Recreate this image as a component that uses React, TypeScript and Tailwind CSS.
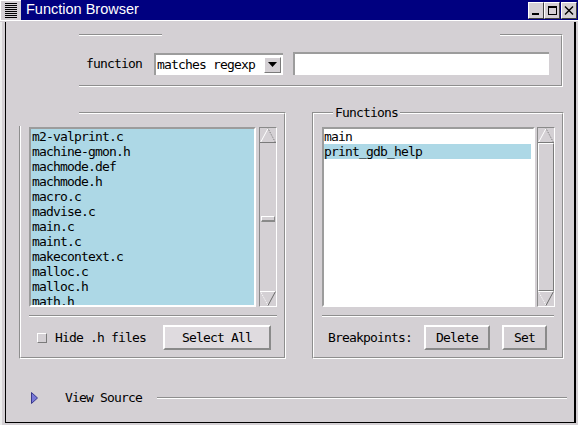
import React from "react";

const LEFT_FILES = [
  "m2-valprint.c",
  "machine-gmon.h",
  "machmode.def",
  "machmode.h",
  "macro.c",
  "madvise.c",
  "main.c",
  "maint.c",
  "makecontext.c",
  "malloc.c",
  "malloc.h",
  "math.h",
];

// etched line: dark gray on top, white under it
const Etched = ({ className = "" }: { className?: string }) => (
  <div className={`h-[2px] border-t border-b border-t-[#8e8e8e] border-b-white ${className}`} />
);

const UpArrow = () => (
  <svg width="16" height="15" className="block shrink-0">
    <line x1="0.5" y1="14.5" x2="8" y2="0.5" stroke="#ffffff" />
    <line x1="8" y1="0.5" x2="15.5" y2="14.5" stroke="#7a7a7a" strokeDasharray="1 1" />
    <line x1="0" y1="14.5" x2="16" y2="14.5" stroke="#7a7a7a" />
  </svg>
);

const DownArrow = () => (
  <svg width="16" height="15" className="block shrink-0">
    <line x1="0" y1="0.5" x2="16" y2="0.5" stroke="#ffffff" />
    <line x1="0.5" y1="0.5" x2="8" y2="14.5" stroke="#ffffff" strokeDasharray="1 1" />
    <line x1="8" y1="14.5" x2="15.5" y2="0.5" stroke="#6a6a6a" />
  </svg>
);

const Scrollbar = ({ full }: { full?: boolean }) => (
  <div className="w-[18px] h-[180px] flex flex-col border border-t-[#8a8a8a] border-l-[#8a8a8a] border-r-white border-b-white">
    <UpArrow />
    <div className="flex-1 flex flex-col">
      {full ? (
        <div className="flex-1 border border-t-white border-l-white border-r-[#7a7a7a] border-b-[#7a7a7a]" />
      ) : (
        <div className="mt-[73px] mx-px h-[6px] border-t border-l border-r border-b-2 border-t-white border-l-white border-r-[#8a8a8a] border-b-[#8a8a8a]" />
      )}
    </div>
    <DownArrow />
  </div>
);

const Button = ({ label, className = "" }: { label: string; className?: string }) => (
  <div
    className={`h-[25px] flex items-center justify-center border-t-2 border-l-2 border-b-2 border-r-2 border-t-white border-l-white border-b-[#8a8a8a] border-r-[#8a8a8a] ${className}`}
  >
    {label}
  </div>
);

const TitleButton = ({ children }: { children: React.ReactNode }) => (
  <div className="w-[16px] h-[17px] bg-[#d4d0d4] border border-t-white border-l-white border-r-[#404040] border-b-[#404040]">
    <svg width="14" height="15" className="block">
      {children}
    </svg>
  </div>
);

export default function App() {
  return (
    <div className="w-[578px] h-[425px] bg-[#d4d0d4] flex flex-col overflow-hidden text-black text-[13px] tracking-[-0.83px] [font-family:'DejaVu_Sans_Mono',monospace]">
      {/* title bar */}
      <div className="flex h-[20px] shrink-0">
        <div className="w-[21px] h-[20px] flex items-center justify-center border-t border-l border-t-white border-l-white">
          <svg width="12" height="15" className="block">
            {[0, 2, 4, 6, 8, 10, 12, 14].map((y) => (
              <line key={y} x1="0" y1={y + 0.5} x2="12" y2={y + 0.5} stroke="#000" />
            ))}
          </svg>
        </div>
        <div className="flex-1 bg-[#000080] flex items-center pl-[5px] text-white text-[14.5px] tracking-normal [font-family:'Liberation_Sans',Arial,sans-serif]">
          Function Browser
        </div>
        <div className="bg-[#000080] flex pt-[2px] pr-px">
          <TitleButton>
            <rect x="3" y="10" width="7" height="2" fill="#000" />
          </TitleButton>
          <TitleButton>
            <rect x="3.5" y="3.5" width="8" height="8" fill="none" stroke="#000" />
            <rect x="3" y="3" width="9" height="2" fill="#000" />
          </TitleButton>
          <div className="ml-px">
            <TitleButton>
              <path d="M3 3.5 L11 11.5 M11 3.5 L3 11.5" stroke="#000" strokeWidth="1.4" />
            </TitleButton>
          </div>
        </div>
      </div>
      <div className="h-[2px] shrink-0 border-t border-t-white" />

      {/* window frame */}
      <div className="flex-1 min-h-0 border-l-2 border-l-[#ececec] pl-[3px] pr-[2px] pb-[2px]">
        <div className="h-full flex flex-col border-l border-r-2 border-b border-black pt-[12px]">
          {/* search frame */}
          <div className="relative ml-[73px] w-[484px] h-[53px] border-t border-r border-b border-t-[#8e8e8e] border-r-white border-b-white">
            <div className="h-full border-t border-r border-b border-t-white border-r-[#8e8e8e] border-b-[#8e8e8e]">
              <div className="mt-[16px] h-[23px] flex items-center">
                <div className="w-[75px] pl-[7px]">function</div>
                <div className="w-[129px] h-[22px] flex items-center bg-white border-t-2 border-l-2 border-t-[#9c9c9c] border-l-[#9c9c9c]">
                  <div className="flex-1 pl-px">matches regexp</div>
                  <div className="w-[17px] h-[16px] mr-[2px] bg-[#d4d0d4] flex items-center justify-center border border-t-white border-l-white border-r-[#7a7a7a] border-b-[#7a7a7a]">
                    <svg width="9" height="5" className="block">
                      <polygon points="0,0 9,0 4.5,5" fill="#000" />
                    </svg>
                  </div>
                </div>
                <div className="ml-[10px] w-[256px] h-[23px] bg-white border-t-2 border-l-2 border-t-[#9c9c9c] border-l-[#9c9c9c]" />
              </div>
            </div>
            <div className="absolute left-[83px] -top-px w-[338px] h-[2px] bg-[#d4d0d4]" />
          </div>

          {/* the two list frames */}
          <div className="mt-[25px] flex">
            <div className="relative ml-[13px] w-[267px] h-[247px] border border-t-[#8e8e8e] border-l-[#8e8e8e] border-r-white border-b-white">
              <div className="h-full border border-t-white border-l-white border-r-[#8e8e8e] border-b-[#8e8e8e] pl-[8px] pt-[13px]">
                <div className="flex">
                  <div className="w-[227px] h-[180px] bg-[#add8e6] overflow-hidden border-2 border-t-[#9c9c9c] border-l-[#9c9c9c] border-r-white border-b-white">
                    {LEFT_FILES.map((f) => (
                      <div key={f} className="h-[15px] leading-[15px] pl-px whitespace-nowrap">
                        {f}
                      </div>
                    ))}
                  </div>
                  <div className="ml-[3px]">
                    <Scrollbar />
                  </div>
                </div>
                <Etched className="mt-[8px] w-[248px]" />
                <div className="mt-[8px] h-[25px] flex items-center">
                  <div className="ml-[8px] w-[10px] h-[10px] border border-t-white border-l-white border-r-[#7a7a7a] border-b-[#7a7a7a]" />
                  <div className="ml-[8px] w-[108px]">Hide .h files</div>
                  <Button label="Select All" className="w-[108px] bg-[#dfdbdf]" />
                </div>
              </div>
              <div className="absolute -left-px -top-px w-[60px] h-[14px] bg-[#d4d0d4]" />
            </div>

            <div className="relative ml-[26px] w-[252px] h-[247px] border border-t-[#8e8e8e] border-l-[#8e8e8e] border-r-white border-b-white">
              <div className="h-full border border-t-white border-l-white border-r-[#8e8e8e] border-b-[#8e8e8e] pl-[8px] pt-[13px]">
                <div className="flex">
                  <div className="w-[213px] h-[180px] bg-white overflow-hidden border-2 border-t-[#9c9c9c] border-l-[#9c9c9c] border-r-white border-b-white">
                    <div className="h-[15px] leading-[15px] whitespace-nowrap">main</div>
                    <div className="h-[15px] leading-[15px] whitespace-nowrap bg-[#add8e6] mr-[2px]">print_gdb_help</div>
                  </div>
                  <div className="ml-[2px]">
                    <Scrollbar full />
                  </div>
                </div>
                <Etched className="mt-[8px] w-[232px]" />
                <div className="mt-[8px] h-[25px] flex items-center">
                  <div className="ml-[6px] w-[96px]">Breakpoints:</div>
                  <Button label="Delete" className="w-[66px]" />
                  <Button label="Set" className="ml-[12px] w-[45px]" />
                </div>
              </div>
              <div className="absolute left-[20px] -top-[8px] h-[15px] leading-[15px] px-[2px] bg-[#d4d0d4]">Functions</div>
            </div>
          </div>

          {/* view source toggle */}
          <div className="mt-[32px] h-[14px] flex items-center">
            <svg width="7" height="12" className="block ml-[25px]">
              <polygon points="0.5,0.5 6.5,6 0.5,11.5" fill="#7878d8" stroke="#38388c" />
            </svg>
            <div className="ml-[27px]">View Source</div>
            <Etched className="ml-[15px] mr-[7px] flex-1" />
          </div>
        </div>
      </div>
    </div>
  );
}
